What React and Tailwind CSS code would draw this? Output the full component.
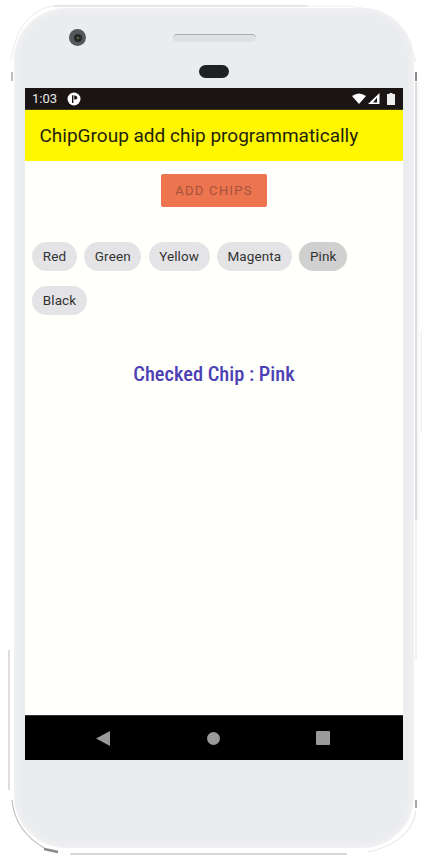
const chips = [
  ["Red", "w-[45px]"],
  ["Green", "w-[57px]"],
  ["Yellow", "w-[61px]"],
  ["Magenta", "w-[75px]"],
  ["Pink", "w-[48px]"],
];

function Chip({ label, width, active }) {
  return (
    <div className={`${width} h-[29px] rounded-full flex items-center justify-center text-[13.5px] tracking-[0.1px] text-[#333333] ${active ? "bg-[#d0d0d0]" : "bg-[#e4e4e6]"}`}>
      {label}
    </div>
  );
}

export default function App() {
  return (
    <div className="relative w-[427px] h-[859px] bg-white overflow-hidden font-['Roboto',sans-serif]">
      <svg className="absolute inset-0" width="427" height="859" fill="none">
        <path d="M53 6 H308" stroke="#d6ced1" strokeWidth="1.2" />
        <path d="M308 6 H345 Q400 8 416 62" stroke="#f0eef0" strokeWidth="1.2" />
        <path d="M53 6 Q18 12 11 60" stroke="#f0eef0" strokeWidth="1.2" />
        <path d="M9 650 V790" stroke="#e2dcdf" strokeWidth="2" />
        <path d="M12 72 V81" stroke="#a8a8aa" strokeWidth="1.5" />
        <path d="M416 72 V81" stroke="#8a8a8c" strokeWidth="2" />
        <path d="M416 82 V520" stroke="#bdb9bc" strokeWidth="1" />
        <path d="M418 82 V520" stroke="#f3eef0" strokeWidth="1" />
        <path d="M416 520 V660" stroke="#e6e2e4" strokeWidth="1" />
        <path d="M421 330 V432" stroke="#ece9ea" strokeWidth="1" />
        <path d="M12 800 Q15 832 46 849" stroke="#c4c0c2" strokeWidth="1.2" />
        <path d="M44 849 L58 852" stroke="#8c8888" strokeWidth="2.5" />
        <path d="M70 854 H347" stroke="#b5afb1" strokeWidth="1" />
        <path d="M416 800 V808" stroke="#8a8a8c" strokeWidth="1.5" />
        <path d="M416 810 Q412 842 368 852" stroke="#ece8ea" strokeWidth="1.2" />
      </svg>

      <div className="relative ml-[14px] mt-[8px] w-[400px] h-[840px] rounded-[52px] bg-[#ebecee] shadow-[inset_0_0_7px_#f8f8fa] pt-[80px] px-[11px]">
        <div className="absolute left-[55px] top-[21px] w-[17px] h-[17px] rounded-full bg-[#55585b] flex items-center justify-center">
          <div className="w-[8px] h-[8px] rounded-full bg-[#26282a] flex items-center justify-center">
            <div className="w-[2px] h-[2px] rounded-full bg-[#7d7a3a]" />
          </div>
        </div>
        <div className="absolute left-[159px] top-[26px] w-[83px] h-[8px] rounded-full bg-[#dfe1e3] border-t border-[#a9adb1]" />
        <div className="absolute left-[185px] top-[57px] w-[30px] h-[13px] rounded-full bg-[#1f2022]" />

        <div className="w-[378px] flex flex-col">
          <div className="h-[21px] bg-[#1a1414] flex items-center pl-[7px] pr-[8px] text-white">
            <span className="text-[13px] text-[#e8e8e8]">1:03</span>
            <svg className="ml-[10px]" width="14" height="14" viewBox="0 0 14 14">
              <circle cx="7" cy="7" r="6.5" fill="#fff" />
              <path d="M5 3.2 H6.4 V11 H5 Z M7.2 3.4 A3 3 0 0 1 10.4 6.2 A3 3 0 0 1 7.2 7.4 Z" fill="#1a1414" />
            </svg>
            <div className="ml-auto flex items-center gap-[2px]">
              <svg width="14" height="11" viewBox="0 0 14 11"><path d="M0 3 Q7 -2 14 3 L7 11 Z" fill="#fff" /></svg>
              <svg width="12" height="11" viewBox="0 0 12 11"><path d="M11.5 0 V11 H0 Z" fill="#fff" /><path d="M9 4.5 V9.5 H5 Z" fill="#1a1414" /></svg>
              <svg className="ml-[5px]" width="8" height="12" viewBox="0 0 8 12"><path d="M2.5 0 H5.5 V1 H8 V12 H0 V1 H2.5 Z" fill="#eee" /></svg>
            </div>
          </div>
          <div className="h-[52px] bg-[#fff700] border-t border-[#3b3a08] flex items-center pl-[14.5px] pt-[2px] text-[19px] font-[450] text-[#1f1f10]">
            ChipGroup add chip programmatically
          </div>
          <div className="h-[554px] bg-[#fffffb] flex flex-col">
            <div className="self-center mt-[13px] w-[106px] h-[33px] rounded-[2px] bg-[#ec7550] flex items-center justify-center text-[13px] font-[450] tracking-[1.3px] text-[#a5523a]">
              ADD CHIPS
            </div>
            <div className="mt-[35px] pl-[7px] flex flex-wrap gap-x-[7.3px] gap-y-[15px] w-[340px]">
              {chips.map(([label, width]) => (
                <Chip key={label} label={label} width={width} active={label === "Pink"} />
              ))}
              <Chip label="Black" width="w-[55px]" />
            </div>
            <div className="mt-[44px] text-center font-medium text-[20.4px] text-[#4d3fb5] [font-stretch:75%]">
              Checked Chip : Pink
            </div>
          </div>
          <div className="h-[45px] bg-black border-t border-[#333] flex items-center">
            <svg className="ml-[71px]" width="14" height="15" viewBox="0 0 14 15"><path d="M14 0 V15 L0 7.5 Z" fill="#9a9a9a" /></svg>
            <div className="ml-[97px] w-[13px] h-[13px] rounded-full bg-[#9a9a9a]" />
            <div className="ml-[96px] w-[14px] h-[14px] rounded-[1px] bg-[#9a9a9a]" />
          </div>
        </div>
      </div>
    </div>
  );
}
